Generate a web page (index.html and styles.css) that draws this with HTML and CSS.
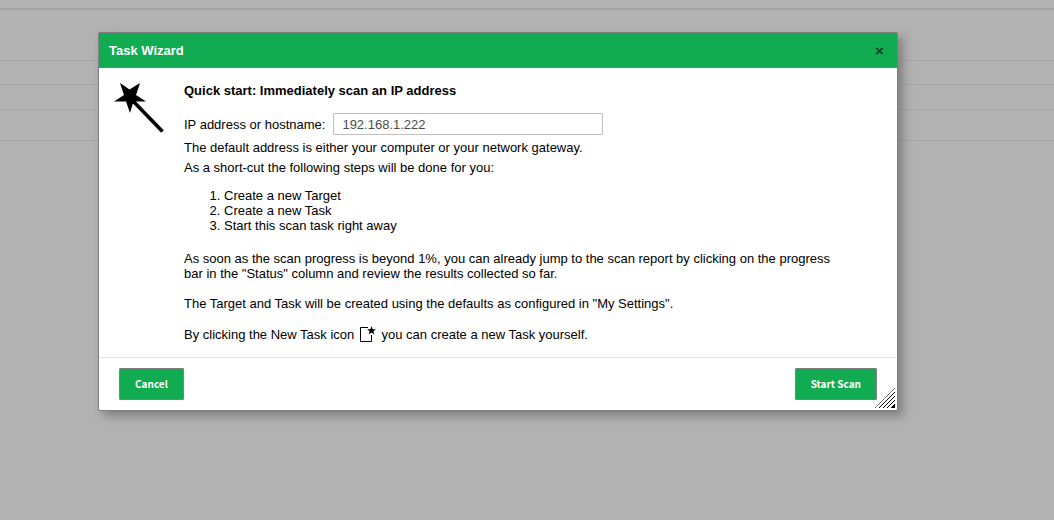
FILE: index.html
```html
<!DOCTYPE html>
<html lang="en">
<head>
<meta charset="utf-8">
<title>Task Wizard</title>
<link rel="stylesheet" href="styles.css">
</head>
<body>
<div class="backdrop" aria-hidden="true">
  <div class="band band-top"></div>
  <div class="band band-tall"></div>
  <div class="band band-row"></div>
  <div class="band band-row-large"></div>
  <div class="band band-footer"></div>
</div>
<section class="dialog" role="dialog" aria-labelledby="dialog-title">
  <header class="dialog-header">
    <h1 class="dialog-title" id="dialog-title">Task Wizard</h1>
    <button class="close" type="button" aria-label="Close">×</button>
  </header>
  <div class="dialog-body">
    <svg class="wand" viewBox="0 0 50 50" aria-hidden="true">
      <path d="M6 0 15.500 6.500 26 0 22 12 32 18.500H19.500L16 30 12 18.500H0L10 12Z"/>
      <path d="M19 18 48.500 48.500" fill="none" stroke="#000" stroke-width="3.600"/>
    </svg>
    <div class="content">
      <h2 class="heading">Quick start: Immediately scan an IP address</h2>
      <div class="field">
        <label for="host">IP address or hostname:</label>
        <input class="host" id="host" type="text" value="192.168.1.222">
      </div>
      <p class="hint">The default address is either your computer or your network gateway.</p>
      <p class="hint">As a short-cut the following steps will be done for you:</p>
      <ol class="steps">
        <li>Create a new Target</li>
        <li>Create a new Task</li>
        <li>Start this scan task right away</li>
      </ol>
      <p class="note">As soon as the scan progress is beyond 1%, you can already jump to the scan report by clicking on the progress bar in the "Status" column and review the results collected so far.</p>
      <p class="note">The Target and Task will be created using the defaults as configured in "My Settings".</p>
      <p class="icon-note">By clicking the New Task icon
        <svg class="new-icon" viewBox="0 0 16 16" role="img" aria-label="New Task">
          <path d="M8 1.500H.5V15.500H11.500V9" fill="none" stroke="#000"/>
          <path d="M11.500 0 12.700 3.200H16L13.400 5.200 14.500 8.500 11.500 6.500 8.500 8.500 9.600 5.200 7 3.200H10.300Z"/>
        </svg>
        you can create a new Task yourself.</p>
    </div>
  </div>
  <footer class="dialog-footer">
    <button class="action" type="button">Cancel</button>
    <button class="action" type="button">Start Scan</button>
  </footer>
  <svg class="grip" viewBox="0 0 20 20" aria-hidden="true" shape-rendering="crispEdges">
    <path d="M0 20 20 0" stroke="#777"/>
    <path d="M4 20 20 4M8 20 20 8M12 20 20 12" stroke="#000" stroke-width="1.300"/>
    <path d="M15 20 20 15V20Z"/>
  </svg>
</section>
</body>
</html>
```
FILE: styles.css
```css
* {
  box-sizing: border-box;
}

body {
  margin: 0;
  min-height: 100vh;
  background: #b2b2b2;
  color: #000;
  font: 13px/15px "Liberation Sans", Arial, sans-serif;
}

.band {
  border-bottom: 1px solid #a3a3a3;
}

.band-top {
  height: 10px;
  border-bottom-width: 2px;
}

.band-tall {
  height: 51px;
}

.band-row {
  height: 24px;
}

.band-row-large {
  height: 25px;
}

.band-footer {
  height: 31px;
}

.dialog {
  position: absolute;
  top: 32px;
  left: 98px;
  width: 800px;
  max-width: calc(100% - 98px);
  background: #fff;
  border: 1px solid #7f7f7f;
  border-radius: 2px;
  box-shadow: 5px 5px 10px #7f7f7f;
}

.dialog-header {
  display: flex;
  align-items: center;
  justify-content: space-between;
  padding: 10px 10px 9px;
  background: #11ab51;
  border-bottom: 1px solid #7f7f7f;
}

.dialog-title {
  margin: 0;
  color: #fff;
  font-size: 13px;
  line-height: 15px;
}

.close {
  width: 15px;
  padding: 0;
  border: 0;
  background: none;
  color: #074320;
  font: bold 15px/15px "Liberation Sans", Arial, sans-serif;
}

.dialog-body {
  display: flex;
  align-items: flex-start;
  gap: 20px;
  padding: 15px;
}

.wand {
  flex: none;
  width: 50px;
  height: 50px;
}

.content {
  flex: 1;
  padding-right: 40px;
}

.heading {
  margin: 0 0 15px;
  font-size: 13px;
  line-height: 15px;
}

.field {
  display: flex;
  align-items: center;
  gap: 8px;
  margin-bottom: 5px;
}

.host {
  width: 270px;
  height: 22px;
  padding: 1px 8px;
  border: 1px solid #bfbfbf;
  border-radius: 2px;
  background: #fff;
  color: #4c4c4c;
  font: 13px/15px "Liberation Sans", Arial, sans-serif;
}

.hint {
  margin: 0 0 5px;
}

.steps {
  margin: 13px 0 18px;
  padding-left: 40px;
}

.note {
  margin: 0 0 15px;
}

.icon-note {
  margin: 0;
}

.new-icon {
  width: 16px;
  height: 16px;
  margin: 0 2px;
  vertical-align: -3px;
}

.dialog-footer {
  display: flex;
  justify-content: space-between;
  padding: 10px 20px;
  border-top: 1px solid #e5e5e5;
}

.action {
  height: 32px;
  padding: 0 15px;
  border: 1px solid #7f7f7f;
  border-radius: 1px;
  background: #11ab51;
  color: #fff;
  font: bold 10px/16px "Noto Sans CJK SC", sans-serif;
}

.grip {
  position: absolute;
  right: 2px;
  bottom: 2px;
  width: 20px;
  height: 20px;
}
```
